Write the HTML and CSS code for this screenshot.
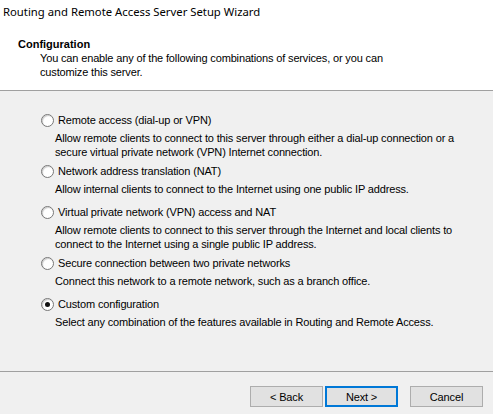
FILE: index.html
```html
<!DOCTYPE html>
<html lang="en">
<head>
    <meta charset="UTF-8">
    <title>Routing and Remote Access Server Setup Wizard</title>
    <link rel="stylesheet" href="styles.css">
</head>
<body>
    <div class="wizard">
        <div class="header">
            <div class="window-title">Routing and Remote Access Server Setup Wizard</div>
            <div class="page-title">Configuration</div>
            <div class="page-desc">You can enable any of the following combinations of services, or you can<br>customize this server.</div>
        </div>

        <div class="options">
            <div class="option">
                <label class="option-label"><span class="radio"></span>Remote access (dial-up or VPN)</label>
                <div class="option-desc">Allow remote clients to connect to this server through either a dial-up connection or a<br>secure virtual private network (VPN) Internet connection.</div>
            </div>
            <div class="option single">
                <label class="option-label"><span class="radio"></span>Network address translation (NAT)</label>
                <div class="option-desc">Allow internal clients to connect to the Internet using one public IP address.</div>
            </div>
            <div class="option">
                <label class="option-label"><span class="radio"></span>Virtual private network (VPN) access and NAT</label>
                <div class="option-desc">Allow remote clients to connect to this server through the Internet and local clients to<br>connect to the Internet using a single public IP address.</div>
            </div>
            <div class="option single">
                <label class="option-label"><span class="radio"></span>Secure connection between two private networks</label>
                <div class="option-desc">Connect this network to a remote network, such as a branch office.</div>
            </div>
            <div class="option">
                <label class="option-label"><span class="radio checked"></span>Custom configuration</label>
                <div class="option-desc">Select any combination of the features available in Routing and Remote Access.</div>
            </div>
        </div>

        <div class="footer">
            <button class="btn">&lt; Back</button>
            <button class="btn default">Next &gt;</button>
            <button class="btn cancel">Cancel</button>
        </div>
    </div>
</body>
</html>
```
FILE: styles.css
```css
body {
    margin: 0;
    background: #f0f0f0;
    font-family: 'Liberation Sans', Arial, sans-serif;
    font-size: 11px;
    letter-spacing: -0.15px;
    color: #000;
}
.wizard {
    width: 493px;
    height: 414px;
    display: flex;
    flex-direction: column;
}
.header {
    height: 91px;
    box-sizing: border-box;
    background: #fff;
    border-bottom: 1px solid #a0a0a0;
    padding: 3px 0 0 3px;
}
.window-title {
    font-family: 'Noto Sans', sans-serif;
    font-size: 11.3px;
    letter-spacing: 0;
    line-height: 18px;
}
.page-title {
    font-weight: bold;
    margin: 16px 0 0 15px;
    line-height: 14px;
    letter-spacing: 0;
}
.page-desc {
    margin-left: 37px;
    line-height: 14px;
}

.options {
    flex: 1;
    padding: 22px 0 0 41px;
}
.option {
    margin-bottom: 5px;
}
.option.single {
    margin-bottom: 9px;
}
.option-label {
    display: flex;
    align-items: center;
    height: 14px;
}
.radio {
    width: 11px;
    height: 11px;
    border: 1px solid #777;
    border-radius: 50%;
    background: #fff;
    margin-right: 4px;
    box-shadow: inset 1px 1px 1px #ccc;
    position: relative;
}
.radio.checked::after {
    content: "";
    position: absolute;
    left: 3px;
    top: 3px;
    width: 5px;
    height: 5px;
    border-radius: 50%;
    background: #111;
}
.option-desc {
    margin: 4px 0 0 14px;
    line-height: 14px;
}

.footer {
    height: 43px;
    box-sizing: border-box;
    border-top: 1px solid #a0a0a0;
    display: flex;
    align-items: flex-start;
    padding: 14px 0 0 250px;
}
.btn {
    width: 73px;
    height: 21px;
    box-sizing: border-box;
    background: #e1e1e1;
    border: 1px solid #adadad;
    font-family: 'Liberation Sans', Arial, sans-serif;
    font-size: 11px;
    letter-spacing: -0.15px;
    color: #000;
    padding: 0;
    margin-right: 2px;
}
.btn.default {
    border: 2px solid #0078d7;
}
.btn.cancel {
    margin-left: 10px;
}
```
